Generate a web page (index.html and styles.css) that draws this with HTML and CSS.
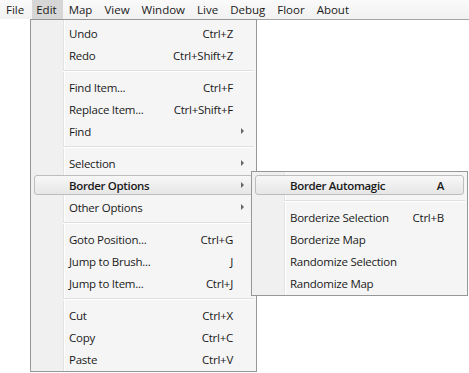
FILE: index.html
```html
<!DOCTYPE html>
<html lang="en">
<head>
    <meta charset="UTF-8">
    <title>Edit menu</title>
    <link rel="stylesheet" href="styles.css">
</head>
<body>
    <nav class="menubar">
        <span class="menubar-item">File</span>
        <span class="menubar-item open">Edit</span>
        <span class="menubar-item">Map</span>
        <span class="menubar-item">View</span>
        <span class="menubar-item">Window</span>
        <span class="menubar-item">Live</span>
        <span class="menubar-item">Debug</span>
        <span class="menubar-item">Floor</span>
        <span class="menubar-item">About</span>
    </nav>
    <div class="workspace"></div>

    <!-- dropdown of the Edit menu -->
    <ul class="menu edit-menu">
        <li class="item"><span class="label">Undo</span><span class="key">Ctrl+Z</span><span class="arrow"></span></li>
        <li class="item"><span class="label">Redo</span><span class="key">Ctrl+Shift+Z</span><span class="arrow"></span></li>
        <li class="sep"></li>
        <li class="item"><span class="label">Find Item...</span><span class="key">Ctrl+F</span><span class="arrow"></span></li>
        <li class="item"><span class="label">Replace Item...</span><span class="key">Ctrl+Shift+F</span><span class="arrow"></span></li>
        <li class="item"><span class="label">Find</span><span class="arrow sub"></span></li>
        <li class="sep"></li>
        <li class="item"><span class="label">Selection</span><span class="arrow sub"></span></li>
        <li class="item active"><span class="label">Border Options</span><span class="arrow sub"></span></li>
        <li class="item"><span class="label">Other Options</span><span class="arrow sub"></span></li>
        <li class="sep"></li>
        <li class="item"><span class="label">Goto Position...</span><span class="key">Ctrl+G</span><span class="arrow"></span></li>
        <li class="item"><span class="label">Jump to Brush...</span><span class="key">J</span><span class="arrow"></span></li>
        <li class="item"><span class="label">Jump to Item...</span><span class="key">Ctrl+J</span><span class="arrow"></span></li>
        <li class="sep"></li>
        <li class="item"><span class="label">Cut</span><span class="key">Ctrl+X</span><span class="arrow"></span></li>
        <li class="item"><span class="label">Copy</span><span class="key">Ctrl+C</span><span class="arrow"></span></li>
        <li class="item"><span class="label">Paste</span><span class="key">Ctrl+V</span><span class="arrow"></span></li>
    </ul>

    <!-- Border Options submenu -->
    <ul class="menu border-menu">
        <li class="item active"><span class="label">Border Automagic</span><span class="key">A</span><span class="arrow"></span></li>
        <li class="sep"></li>
        <li class="item"><span class="label">Borderize Selection</span><span class="key">Ctrl+B</span><span class="arrow"></span></li>
        <li class="item"><span class="label">Borderize Map</span><span class="arrow"></span></li>
        <li class="item"><span class="label">Randomize Selection</span><span class="arrow"></span></li>
        <li class="item"><span class="label">Randomize Map</span><span class="arrow"></span></li>
    </ul>
</body>
</html>
```

FILE: styles.css
```css
* {
    box-sizing: border-box;
}

body {
    margin: 0;
    height: 373px;
    background-color: #fff;
    font-family: "Open Sans", "Noto Sans", sans-serif;
    font-size: 11.5px;
    color: #1a1a1a;
    overflow: hidden;
}

.menubar {
    display: flex;
    height: 19px;
    line-height: 19px;
    background: linear-gradient(#fafafa, #f1f1f1);
}

.menubar-item {
    margin-left: 2px;
    padding: 0 6px 0 4px;
}

.menubar-item.open {
    background-color: #d6d6d6;
}

.workspace {
    margin-left: 30px;
    height: 354px;
    border-top: 1px solid #a5a5a5;
}

.menu {
    position: absolute;
    display: flex;
    flex-direction: column;
    margin: 0;
    padding: 2px 0 1px;
    list-style: none;
    letter-spacing: -0.25px;
    border: 1px solid #979797;
    background:
        linear-gradient(to right, #f0f0f0 32px, #e2e3e3 32px, #e2e3e3 33px, #fff 33px, #fff 34px, transparent 34px),
        #f5f5f5;
}

.edit-menu {
    left: 30px;
    top: 19px;
    width: 227px;
}

.border-menu {
    left: 251px;
    top: 171px;
    width: 217px;
}

.item {
    display: flex;
    align-items: center;
    height: 20px;
    margin: 1px 3px;
    padding-left: 34px;
    border: 1px solid transparent;
    border-radius: 3px;
    white-space: nowrap;
}

.item.active {
    border-color: #bdbdbd;
    background: linear-gradient(#f7f7f7, #e6e6e6);
    font-weight: 600;
    letter-spacing: -0.35px;
}

.label {
    flex: 1;
}

.arrow {
    width: 19px;
    height: 6px;
}

.arrow.sub::before {
    content: "";
    display: block;
    margin-left: 8px;
    width: 0;
    height: 0;
    border-left: 3px solid #666;
    border-top: 3px solid transparent;
    border-bottom: 3px solid transparent;
}

.sep {
    height: 10px;
    margin: 0 2px 0 32px;
    background: linear-gradient(#e0e0e0, #e0e0e0) 0 4px / 100% 1px no-repeat,
        linear-gradient(#fff, #fff) 0 5px / 100% 1px no-repeat;
}
```
